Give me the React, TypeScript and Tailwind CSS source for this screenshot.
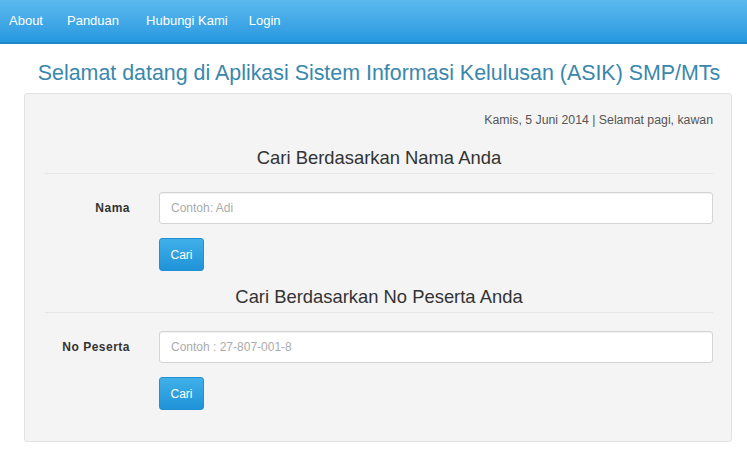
import React from "react";

const font = { fontFamily: '"Liberation Sans", Arial, Helvetica, sans-serif' };

function SearchForm({
  title,
  label,
  placeholder,
}: {
  title: string;
  label: string;
  placeholder: string;
}) {
  return (
    <div>
      <h3 className="text-center text-[18.4px] leading-[26px] text-[#333] pb-[2px] border-b border-[#e5e5e5]">
        {title}
      </h3>
      <div className="flex items-center mt-[18px]">
        <label className="w-[85px] text-right text-[12px] font-bold text-[#333] tracking-[0.5px]">
          {label}
        </label>
        <input
          type="text"
          placeholder={placeholder}
          className="ml-[29px] flex-1 h-[32px] px-[11px] bg-white border border-[#d4d4d4] rounded-[3px] text-[12px] text-[#555] placeholder:text-[#ababab] shadow-[inset_0_1px_1px_rgba(0,0,0,0.06)] outline-none"
        />
      </div>
      <div className="pl-[114px] mt-[14px]">
        <button
          type="button"
          className="w-[45px] h-[33px] rounded-[3px] text-white text-[12px] bg-gradient-to-b from-[#3fb0e8] to-[#1f93d9] border border-[#2190d2]"
        >
          Cari
        </button>
      </div>
    </div>
  );
}

export default function App() {
  return (
    <div className="min-h-[470px] bg-white" style={font}>
      <nav className="h-[44px] bg-gradient-to-b from-[#5bbaee] to-[#2598df] border-b-2 border-[#1e88cc] flex items-center pl-[9px]">
        <a className="text-white text-[13px] mr-[24px]">About</a>
        <a className="text-white text-[13px] mr-[27px]">Panduan</a>
        <a className="text-white text-[13px] mr-[21px]">Hubungi Kami</a>
        <a className="text-white text-[13px]">Login</a>
      </nav>

      <div className="w-[708px] ml-[24px]">
        <h1 className="text-center text-[21.4px] leading-[28px] text-[#3a87ad] mt-[15px] pl-[2px]">
          Selamat datang di Aplikasi Sistem Informasi Kelulusan (ASIK) SMP/MTs
        </h1>

        <div className="mt-[6px] h-[349px] bg-[#f4f4f4] border border-[#e3e3e3] rounded-[3px] pl-[20px] pr-[18px] pt-[17px]">
          <p className="text-right text-[12.3px] text-[#555]">
            Kamis, 5 Juni 2014 | Selamat pagi, kawan
          </p>
          <div className="mt-[16px]">
            <SearchForm
              title="Cari Berdasarkan Nama Anda"
              label="Nama"
              placeholder="Contoh: Adi"
            />
          </div>
          <div className="mt-[13px]">
            <SearchForm
              title="Cari Berdasarkan No Peserta Anda"
              label="No Peserta"
              placeholder="Contoh : 27-807-001-8"
            />
          </div>
        </div>
      </div>
    </div>
  );
}
